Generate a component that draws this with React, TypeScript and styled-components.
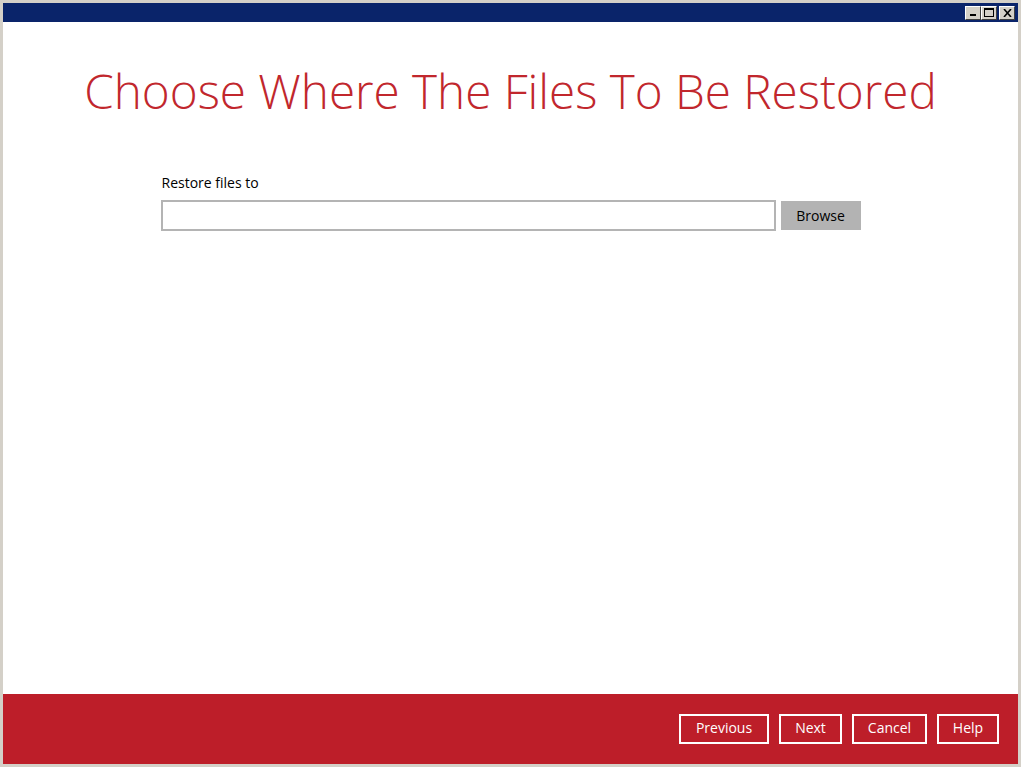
import React from "react";
import styled, { createGlobalStyle } from "styled-components";

const GlobalStyle = createGlobalStyle`
  html, body {
    margin: 0;
    padding: 0;
    background: #d4d0c8;
  }
  * {
    box-sizing: border-box;
  }
`;

const Window = styled.div`
  width: 1021px;
  height: 767px;
  display: flex;
  flex-direction: column;
  padding: 3px;
  background: #d4d0c8;
  font-family: "Open Sans", "Liberation Sans", sans-serif;
`;

const TitleBar = styled.div`
  height: 19px;
  flex: none;
  display: flex;
  justify-content: flex-end;
  align-items: center;
  padding-right: 3px;
  background: #0a246a;
`;

const CtrlButton = styled.div<{ gapLeft?: boolean }>`
  width: 16px;
  height: 14px;
  margin-left: ${({ gapLeft }) => (gapLeft ? "2px" : "0")};
  background: #d4d0c8;
  border-top: 1px solid #ffffff;
  border-left: 1px solid #ffffff;
  border-right: 1px solid #404040;
  border-bottom: 1px solid #404040;
  display: flex;
  align-items: center;
  justify-content: center;
`;

const Body = styled.div`
  flex: 1;
  background: #ffffff;
  display: flex;
  flex-direction: column;
  align-items: center;
`;

const Heading = styled.h1`
  margin: 38px 0 0;
  font-family: "Open Sans", sans-serif;
  font-weight: 300;
  font-size: 47.6px;
  line-height: 62px;
  color: #c1272d;
  letter-spacing: 0;
`;

const Form = styled.div`
  width: 700px;
  margin-top: 51px;
  display: flex;
  flex-direction: column;
`;

const Label = styled.div`
  font-size: 14px;
  color: #000000;
  line-height: 20px;
  margin-bottom: 7px;
  padding-left: 1px;
`;

const Row = styled.div`
  display: flex;
  align-items: center;
  gap: 5px;
`;

const PathInput = styled.input`
  width: 615px;
  height: 31px;
  border: 2px solid #b4b4b4;
  outline: none;
  padding: 0 6px;
  font-family: inherit;
  font-size: 13px;
`;

const BrowseButton = styled.button`
  width: 80px;
  height: 29px;
  border: 0;
  background: #b3b3b3;
  color: #000000;
  font-family: inherit;
  font-size: 14px;
  padding: 0;
`;

const Footer = styled.div`
  height: 70px;
  flex: none;
  background: #bd1e29;
  display: flex;
  justify-content: flex-end;
  align-items: center;
  gap: 10px;
  padding: 0 19px 0 0;
`;

const FooterButton = styled.button<{ w: number }>`
  width: ${({ w }) => w}px;
  height: 30px;
  border: 2px solid #ffffff;
  background: transparent;
  color: #ffffff;
  font-family: inherit;
  font-size: 14px;
  line-height: 24px;
  padding: 0 0 2px;
`;

export default function App() {
  return (
    <>
      <GlobalStyle />
      <Window>
        <TitleBar>
          <CtrlButton>
            <svg width="8" height="8" viewBox="0 0 8 8">
              <rect x="1" y="5" width="6" height="2" fill="#000" />
            </svg>
          </CtrlButton>
          <CtrlButton>
            <svg width="10" height="9" viewBox="0 0 10 9">
              <rect x="0.5" y="0.5" width="9" height="8" fill="none" stroke="#000" />
              <rect x="0" y="0" width="10" height="2" fill="#000" />
            </svg>
          </CtrlButton>
          <CtrlButton gapLeft>
            <svg width="9" height="8" viewBox="0 0 9 8">
              <path d="M1 0 L8 8 M8 0 L1 8" stroke="#000" strokeWidth="1.6" />
            </svg>
          </CtrlButton>
        </TitleBar>
        <Body>
          <Heading>Choose Where The Files To Be Restored</Heading>
          <Form>
            <Label>Restore files to</Label>
            <Row>
              <PathInput type="text" />
              <BrowseButton>Browse</BrowseButton>
            </Row>
          </Form>
        </Body>
        <Footer>
          <FooterButton w={90}>Previous</FooterButton>
          <FooterButton w={63}>Next</FooterButton>
          <FooterButton w={75}>Cancel</FooterButton>
          <FooterButton w={62}>Help</FooterButton>
        </Footer>
      </Window>
    </>
  );
}
